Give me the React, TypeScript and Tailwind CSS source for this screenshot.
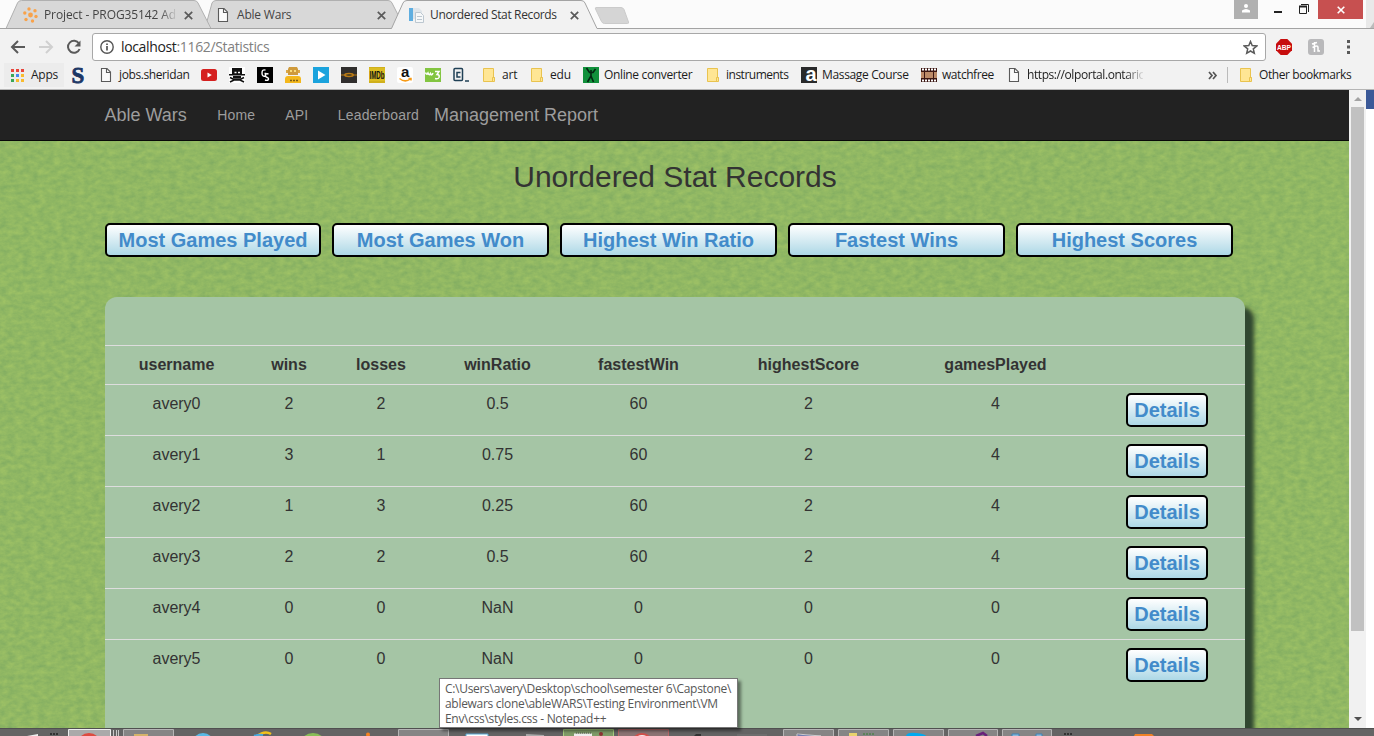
import type { ReactNode } from "react";

const records = [
  ["avery0", "2", "2", "0.5", "60", "2", "4"],
  ["avery1", "3", "1", "0.75", "60", "2", "4"],
  ["avery2", "1", "3", "0.25", "60", "2", "4"],
  ["avery3", "2", "2", "0.5", "60", "2", "4"],
  ["avery4", "0", "0", "NaN", "0", "0", "0"],
  ["avery5", "0", "0", "NaN", "0", "0", "0"],
];
const headings = ["username", "wins", "losses", "winRatio", "fastestWin", "highestScore", "gamesPlayed", ""];
const filters = ["Most Games Played", "Most Games Won", "Highest Win Ratio", "Fastest Wins", "Highest Scores"];

function PageIcon() {
  return (
    <svg width="16" height="16" viewBox="0 0 16 16" className="shrink-0" fill="#fafafa" stroke="#5a5a5a" strokeWidth="1.1">
      <path d="M1.5 1.5h5.500l3.500 3.500v9.500h-9z" />
      <path d="M6.500 1.500v4h4" fill="none" />
    </svg>
  );
}

function Folder() {
  return (
    <svg width="16" height="16" viewBox="0 0 16 16" className="shrink-0">
      <path d="M.5 1.5h10v9h1v4H.5z" fill="#ffe694" stroke="#e9c34f" />
      <path d="M9.5 14v-3.500h2" fill="none" stroke="#e9c34f" />
    </svg>
  );
}

function Cross() {
  return (
    <svg width="9" height="9" viewBox="0 0 9 9" className="shrink-0" stroke="#5a5a5a" strokeWidth="1.7">
      <path d="M.8.8l7.400 7.400M8.200.8L.8 8.200" />
    </svg>
  );
}

function Square({ children }: { children: ReactNode }) {
  return (
    <svg width="16" height="16" viewBox="0 0 16 16" className="mr-3 shrink-0 overflow-visible">
      {children}
    </svg>
  );
}

function TabStrip() {
  return (
    <div className="relative flex h-[29px] bg-[#fbfbfb]">
      <svg width="1374" height="29" className="absolute inset-0">
        <path d="M205 28.500L212 3q1-2.500 4-2.500H388q3 0 4 2.500L405 28.500z" fill="#d8d8d8" stroke="#b0b0b0" />
        <path d="M6 28.500L17.500 3q1-2.500 4-2.500H194q3 0 4 2.500L211 28.500z" fill="#d8d8d8" stroke="#b0b0b0" />
        <path d="M596 7.500h25q2 0 3 2l4.500 12.500q.5 1.500-1 1.500h-23q-2 0-3-2L595.500 9q-.5-1.500.5-1.500z" fill="#d5d5d5" stroke="#cbcbcb" />
        <path d="M1366 0h8v28h-8z" fill="#e9e9e9" />
        <path d="M1370 28l4-6v6z" fill="#bbb" />
        <path d="M0 28.500H391.500L403 3q1-2.500 4-2.500H581q3 0 4 2.500L597 28.500H1374V30H0z" fill="#f2f2f2" stroke="#a3a3a3" />
      </svg>
      <div className="relative flex w-[194px] shrink-0 items-center pl-[23px] pt-px">
        <svg width="15" height="16" viewBox="0 0 15 16" className="shrink-0" fill="#f8a24a">
          <circle cx="7.500" cy="8" r="2.400" /><circle cx="6" cy="2" r="1.700" /><circle cx="12" cy="3.800" r="1.700" />
          <circle cx="13" cy="9.500" r="1.700" /><circle cx="9.500" cy="14" r="1.700" /><circle cx="3" cy="12.500" r="1.700" /><circle cx="1.800" cy="6" r="1.700" />
        </svg>
        <span className="ml-1.5 mr-[8px] w-[132px] shrink-0 overflow-hidden whitespace-nowrap text-[12px] tracking-[-0.1px] text-[#444] [mask-image:linear-gradient(to_right,#000_116px,transparent_134px)]">
          Project - PROG35142 Adv
        </span>
        <Cross />
      </div>
      <div className="relative ml-[23px] flex w-[169px] shrink-0 items-center pt-px">
        <PageIcon />
        <span className="ml-[4px] w-[140px] shrink-0 text-[12px] tracking-[-0.2px] text-[#444]">Able Wars</span>
        <Cross />
      </div>
      <div className="relative ml-[22px] flex w-[172px] shrink-0 items-center pt-px">
        <svg width="16" height="16" viewBox="0 0 16 16" className="shrink-0">
          <path d="M1 1h4v13H1z" fill="#5faee0" /><path d="M5 1h6l3 3v8H5z" fill="#dfe5ea" />
          <path d="M7.500 5.500h5l3 3v7h-8z" fill="#f6f8f9" stroke="#bcc7d0" /><path d="M9 9.500h5M9 12.500h5" stroke="#bcc7d0" />
        </svg>
        <span className="ml-[6px] w-[140px] shrink-0 whitespace-nowrap text-[12px] tracking-[-0.35px] text-[#333]">Unordered Stat Records</span>
        <Cross />
      </div>
      <div className="relative ml-auto mr-[11px] flex h-[19px]">
        <div className="flex w-6 justify-center bg-[#b0b0b0] pt-1">
          <svg width="10" height="9" viewBox="0 0 10 9" fill="#fff"><circle cx="5" cy="2" r="2" /><path d="M1 8.500V6.500Q5 3.500 9 6.500v2z" /></svg>
        </div>
        <svg width="60" height="19" fill="none" stroke="#222">
          <path d="M16 12h8" strokeWidth="2" /><path d="M41.500 6.500h7v7h-7zM43 4.500h7.500V12" /><path d="M41 6.500h8" strokeWidth="2" />
        </svg>
        <div className="flex w-[45px] items-center justify-center bg-[#c75050]">
          <svg width="8" height="8" viewBox="0 0 8 8" stroke="#fff" strokeWidth="1.600"><path d="M.7.7l6.600 6.600M7.300.7L.7 7.300" /></svg>
        </div>
      </div>
    </div>
  );
}

function AddressBar() {
  return (
    <div className="flex h-[33px] items-start bg-[#f2f2f2] pt-1">
      <svg width="92" height="28" viewBox="0 0 92 28" fill="none" strokeWidth="2" className="shrink-0">
        <path d="M25 14H12.500M18 8l-6 6 6 6" stroke="#5a5a5a" />
        <path d="M39 14h12.500M46 8l6 6-6 6" stroke="#d0d0d0" />
        <path d="M79 10.500A6 6 0 1 0 79.600 16" stroke="#5a5a5a" /><path d="M80.500 7.500v6h-6z" fill="#5a5a5a" />
      </svg>
      <div className="flex h-7 w-[1174px] items-center rounded-[3px] border border-[#a8a8a8] bg-white">
        <svg width="14" height="14" viewBox="0 0 14 14" fill="none" stroke="#555" strokeWidth="1.400" className="ml-[7px]">
          <circle cx="7" cy="7" r="6.200" /><path d="M7 6v4.500M7 3.400v1.500" strokeWidth="1.700" />
        </svg>
        <span className="ml-[7px] pb-px text-[14px] tracking-[-0.35px] text-[#222]">localhost<span className="text-[#808080]">:1162/Statistics</span></span>
        <svg width="15" height="15" viewBox="0 0 15 15" className="ml-auto mr-[7px]" fill="none" stroke="#5a5a5a" strokeWidth="1.500">
          <path d="M7.500 1.500l1.700 4.100 4.500.4-3.400 2.900 1 4.400-3.800-2.300-3.800 2.300 1-4.400L1.300 6l4.500-.4z" />
        </svg>
      </div>
      <svg width="108" height="28" className="shrink-0">
        <path d="M14.700 6h6.600L26 10.700v6.600L21.300 22h-6.600L10 17.300v-6.600z" fill="#c70d0d" />
        <text x="18" y="16.800" textAnchor="middle" textLength="14" lengthAdjust="spacingAndGlyphs" className="font-[Liberation_Sans] text-[8px] font-bold" fill="#fff">ABP</text>
        <rect x="42" y="6" width="16" height="16" rx="3" fill="#b9b9bb" />
        <path d="M48.500 9v10M46 11l5-1.500M46.500 14.500q5.500-3 5.500 0v3.500h2" fill="none" stroke="#fff" strokeWidth="1.500" />
        <path d="M81 7h3v3h-3zm0 5.500h3v3h-3zM81 18h3v3h-3z" fill="#5a5a5a" />
      </svg>
    </div>
  );
}

function Bookmarks() {
  return (
    <div className="flex h-7 items-center whitespace-nowrap border-b border-[#b5b5b5] bg-[#f2f2f2] pb-px pl-1 text-[12px] tracking-[-0.22px] text-[#1c1c1c]">
      <div className="flex h-6 w-[60px] shrink-0 items-center bg-[#ececec] pl-[7px]">
        <svg width="13" height="13" viewBox="0 0 13 13" className="shrink-0">
          <path d="M0 0h3v3H0zm5 0h3v3H5zm5 0h3v3h-3z" fill="#e8453c" /><path d="M0 5h3v3H0z" fill="#3aa757" /><path d="M5 5h3v3H5z" fill="#4688f1" />
          <path d="M10 5h3v3h-3zm0 5h3v3h-3zm-5 0h3v3H5z" fill="#f9bb2d" /><path d="M0 10h3v3H0z" fill="#3aa757" />
        </svg>
        <span className="ml-[7px]">Apps</span>
      </div>
      <svg width="36" height="20" viewBox="0 0 36 20" className="shrink-0 overflow-visible"><text x="7.500" y="17.500" className="font-[Liberation_Serif] text-[23px] font-bold" fill="#1c3765" stroke="#1c3765" strokeWidth=".8">S</text></svg>
      <div className="flex w-[101px] shrink-0 items-center"><PageIcon /><span className="ml-[3px] tracking-[-0.4px]">jobs.sheridan</span></div>
      <Square><rect y="2" width="16" height="12" rx="2.500" fill="#d5201f" /><path d="M6.500 5.500v5L10.800 8z" fill="#fff" /></Square>
      <Square>
        <rect width="16" height="16" fill="#fff" />
        <path d="M3 1h10v7H3z" fill="#111" /><path d="M0 7h16v1.500H0zM4 9h8v2H4z" fill="#111" />
        <path d="M5.500 5.500h2m1.500 0h2" stroke="#fff" strokeWidth="1.500" />
        <path d="M1 10.500l3 1.500h8l3-1.500M1 15l4-2h6l4 2" fill="none" stroke="#111" strokeWidth="1.600" />
      </Square>
      <Square><rect width="16" height="16" fill="#000" /><path d="M8.500 3.200Q5 2 5 6t3.500 3V6.500H7.500M11.500 7Q8.500 6 8.500 8.500q0 1.500 1.700 2t1.200 2q-1 1.500-3.400.5" fill="none" stroke="#fff" strokeWidth="1.400" /></Square>
      <Square>
        <path d="M0 12q0-3 3-3h10q3 0 3 3v4H0z" fill="#f4b81c" /><path d="M4 0h8l1 2v6H3V2z" fill="#cf9a3c" /><path d="M1 3h2v3H1zm12 0h2v3h-2z" fill="#dba846" />
        <path d="M5 3h2v2H5zm4 0h2v2H9z" fill="#f9db7a" /><path d="M5 13.500h2m1 0h2m1 0h2" stroke="#795c19" strokeWidth="1.500" />
      </Square>
      <Square><rect width="16" height="16" fill="#1ba3dd" /><path d="M5 3.500v9L12.500 8z" fill="#fff" /></Square>
      <Square><rect width="16" height="16" fill="#302e2d" /><path d="M0 8h16" stroke="#b87914" /><ellipse cx="8" cy="8" rx="5" ry="2.200" fill="#b97a16" /><ellipse cx="8" cy="8" rx="3" ry=".7" fill="#332" /></Square>
      <Square><rect width="16" height="16" fill="#d0b01c" /><rect y="1" width="16" height="13" fill="#dcbd22" /><text x="8" y="12" textAnchor="middle" textLength="15" lengthAdjust="spacingAndGlyphs" className="font-[Liberation_Sans] text-[11px] font-bold tracking-normal" fill="#111">IMDb</text></Square>
      <Square><rect width="16" height="16" rx="2" fill="#fff" /><text x="8" y="10" textAnchor="middle" className="font-[Liberation_Sans] text-[15px] font-bold" fill="#111">a</text><path d="M2.500 11.500q5.500 4.500 11 .5M11.500 11.500h2.500v2" stroke="#f79a16" strokeWidth="1.500" fill="none" /></Square>
      <Square><rect y="1" width="16" height="14" fill="#83c541" /><path d="M.5 5.500q1 3 2.500.5 1 3 2.500.5 1 3 2.500-.5M10 4.500h4l-2 3q3 0 2 3-1 2-4 1" stroke="#fff" strokeWidth="1.500" fill="none" /></Square>
      <svg width="30" height="16" viewBox="0 0 30 16" className="shrink-0"><rect x="1" y="1.500" width="8.500" height="12" rx="1" fill="#f2f2f2" stroke="#204056" strokeWidth="1.500" /><path d="M7.500 5.500H4V10h3.500M12 14h4" fill="none" stroke="#204056" strokeWidth="1.500" /></svg>
      <div className="flex w-12 shrink-0 items-center"><Folder /><span className="ml-[3px]">art</span></div>
      <div className="flex w-[52px] shrink-0 items-center"><Folder /><span className="ml-[3px]">edu</span></div>
      <div className="flex w-[124px] shrink-0 items-center">
        <svg width="16" height="16" viewBox="0 0 16 16" className="shrink-0"><rect width="16" height="16" fill="#11903b" /><path d="M3.500 1l3 4.500h3.500L12.500 2M8 3v6L4.500 15M8 9l2.500 6" stroke="#032611" strokeWidth="1.600" fill="none" /></svg>
        <span className="ml-[5px] tracking-[-0.35px]">Online converter</span>
      </div>
      <div className="flex w-[94px] shrink-0 items-center"><Folder /><span className="ml-[3px] tracking-[-0.5px]">instruments</span></div>
      <div className="flex w-[120px] shrink-0 items-center">
        <svg width="16" height="16" viewBox="0 0 16 16" className="shrink-0 overflow-visible"><rect width="16" height="16" fill="#292a2b" /><text x="10" y="14" textAnchor="middle" className="font-[Liberation_Sans] text-[20px] font-bold" fill="#fff">a</text></svg>
        <span className="ml-[5px] tracking-[-0.35px]">Massage Course</span>
      </div>
      <div className="flex w-[87px] shrink-0 items-center">
        <svg width="16" height="14" viewBox="0 0 16 14" className="shrink-0"><rect width="16" height="14" fill="#3c1713" /><path d="M0 4h3v6H0zm4 0h8v6H4zm9 0h3v6h-3z" fill="#bd8b68" /><path d="M1 1.500h15M1 12.500h15" stroke="#fff" strokeWidth="2" strokeDasharray="2 1" /></svg>
        <span className="ml-[5px] tracking-[-0.45px]">watchfree</span>
      </div>
      <div className="flex w-[200px] shrink-0 items-center">
        <PageIcon />
        <span className="ml-[3px] w-[116px] overflow-hidden tracking-[-0.42px] [mask-image:linear-gradient(to_right,#000_98px,transparent_118px)]">https://olportal.ontario</span>
      </div>
      <svg width="19" height="9" viewBox="0 0 19 9" className="shrink-0" fill="none" stroke="#555" strokeWidth="1.700"><path d="M1 1l3 3.500L1 8M5 1l3 3.500L5 8" /></svg>
      <div className="h-4 w-px bg-[#bbb]" />
      <div className="ml-3 flex items-center"><Folder /><span className="ml-[3px] tracking-[-0.42px]">Other bookmarks</span></div>
    </div>
  );
}

function Site() {
  return (
    <main className="relative h-full w-[1349px] overflow-hidden bg-[#92b964] font-['Liberation_Sans',sans-serif] text-[#333]">
      <svg width="1349" height="646" className="absolute inset-0">
        <filter id="grass" x="0" y="0" width="100%" height="100%" colorInterpolationFilters="sRGB">
          <feTurbulence type="fractalNoise" baseFrequency="0.13 0.2" numOctaves="4" seed="8" />
          <feColorMatrix values=".15 0 0 0 .492  .11 0 0 0 .665  .02 0 0 0 .38  0 0 0 0 1" />
        </filter>
        <rect width="1349" height="646" filter="url(#grass)" />
      </svg>
      <nav className="relative flex h-[51px] items-center border-b border-[#080808] bg-[#222] pl-[104.500px] text-[14px] tracking-[0.15px] text-[#9d9d9d]">
        <span className="text-[18px] tracking-normal">Able Wars</span>
        <span className="ml-[30.500px]">Home</span>
        <span className="ml-[30px]">API</span>
        <span className="ml-[29.500px]">Leaderboard</span>
        <span className="ml-[15px] text-[18px] tracking-normal">Management Report</span>
      </nav>
      <div className="relative ml-[105px] w-[1140px]">
        <h1 className="h-[82px] pt-[19px] text-center text-[30px] leading-[33px]">Unordered Stat Records</h1>
        <div className="grid grid-cols-[227px_repeat(4,228px)]">
          {filters.map((label) => (
            <button key={label} className="h-[34px] w-[calc(100%-11px)] whitespace-nowrap rounded-[5px] border-2 border-black bg-linear-to-b from-white to-[#add8e6] text-[20px] font-bold leading-[30px] text-[#428bca]">
              {label}
            </button>
          ))}
        </div>
        <section className="mt-10 h-[442px] rounded-xl bg-[#a5c5a5] pt-12 shadow-[9px_10px_4px_#304730]">
          <table className="w-full table-fixed border-collapse text-center text-[16px] leading-[22px]">
            <colgroup>
              <col className="w-[143px]" /><col className="w-[82px]" /><col className="w-[102px]" /><col className="w-[131px]" />
              <col className="w-[151px]" /><col className="w-[189px]" /><col className="w-[185px]" /><col className="w-[157px]" />
            </colgroup>
            <thead>
              <tr className="h-[39px] border-t border-[#ddd]">
                {headings.map((h, i) => <th key={i} className="p-0 align-middle">{h}</th>)}
              </tr>
            </thead>
            <tbody>
              {records.map((row) => (
                <tr key={row[0]} className="h-[51px] border-t border-[#ddd]">
                  {row.map((v, i) => <td key={i} className="pt-2 align-top">{v}</td>)}
                  <td className="pt-2 align-top">
                    <button className="mx-auto block h-[34px] w-[82px] rounded-[5px] border-2 border-black bg-linear-to-b from-white to-[#add8e6] pl-px text-[20px] font-bold leading-[30px] text-[#428bca]">
                      Details
                    </button>
                  </td>
                </tr>
              ))}
            </tbody>
          </table>
        </section>
      </div>
    </main>
  );
}

function Taskbar() {
  return (
    <svg width="1374" height="8" viewBox="0 0 1374 8" className="block bg-[#646464]">
      <path d="M0 .5h1374" stroke="#505050" />
      <g fill="#858585" stroke="#b5b5b5">
        <path d="M123.500 10V1.500h50V10M398.500 10V1.500h50V10M783.500 10V1.500h50V10M838.500 10V1.500h50V10M893.500 10V1.500h50V10M948.500 10V1.500h49V10M1002.500 10V1.500h49V10" />
        <path d="M68.500 10V1.500h42V10" fill="#aaa" stroke="#eee" />
        <path d="M563.500 10V1.500h50V10" fill="#7f9b68" stroke="#a8d080" />
        <path d="M618.500 10V1.500h50V10" fill="#8b7474" stroke="#b96a6a" />
      </g>
      <path d="M113.500 2v6M116.500 2v6M118.500 2v6" stroke="#c8c8c8" />
      <path d="M50 6h8M1064 6h8" stroke="#222" strokeWidth="1.500" strokeDasharray="2 1" />
      <path d="M27 8l11-2v2z" fill="#eee" />
      <circle cx="89" cy="17" r="12" fill="#dd4b40" />
      <path d="M134 6h14v2h-14z" fill="#d5b36a" />
      <circle cx="203" cy="16" r="11" fill="#59b9e5" />
      <path d="M257 8q8-6 14-2" stroke="#f4c21a" strokeWidth="2.500" fill="none" /><path d="M254 8q5-2 9-1" stroke="#48a8df" strokeWidth="2" fill="none" />
      <circle cx="313" cy="19" r="14" fill="#88bd57" /><circle cx="368" cy="6.500" r="2" fill="#f58220" />
      <path d="M466 8V6h22v2" fill="#fff" stroke="#56a9d5" /><path d="M526 7l18 1" stroke="#aaa" strokeWidth="2" />
      <path d="M574 8V5.500h18V8z" fill="#eee" /><path d="M576 5h16" stroke="#555" strokeDasharray="1 1" /><circle cx="601" cy="6" r="2" fill="#8f3434" />
      <circle cx="642" cy="16" r="10" fill="#eee" stroke="#d2504b" strokeWidth="2" />
      <path d="M694 8l2-2h5v2z" fill="#333" /><path d="M737 7h30" stroke="#777" />
      <path d="M797 8V6l24 2z" fill="#172f94" stroke="#ccc" /><path d="M849 8V5h8v3z" fill="#ead36d" /><path d="M863 6h11" stroke="#368030" strokeDasharray="2 1" />
      <path d="M906 8q1-4 10-3t10 3z" fill="#00aaf0" /><path d="M976 8l7-3 4 3" fill="none" stroke="#68217a" strokeWidth="2.500" />
      <path d="M1012 8V6h7v2M1036 8V6h6v2" fill="#8db9d9" stroke="#3d82b6" /><path d="M1134 8l1-2h17l2 2z" fill="#ef8125" />
    </svg>
  );
}

export default function App() {
  return (
    <div className="relative flex h-[736px] w-[1374px] flex-col overflow-hidden bg-white font-['Open_Sans','Noto_Sans',sans-serif]">
      <TabStrip />
      <AddressBar />
      <Bookmarks />
      <div className="flex h-[638px]">
        <Site />
        <div className="flex w-[17px] flex-col items-center bg-[#f1f1f1]">
          <svg width="17" height="17"><path d="M5 11l4-4 4 4z" fill="#a3a3a3" /></svg>
          <div className="h-[524px] w-[13px] bg-[#c1c1c1]" />
          <svg width="17" height="17" className="mt-auto"><path d="M5 6h8l-4 4z" fill="#505050" /></svg>
        </div>
        <div className="h-[19px] w-2 bg-[#3b5998]" />
      </div>
      <Taskbar />
      <div className="absolute left-[439px] top-[678px] h-[50px] w-[299px] whitespace-nowrap border border-[#767676] bg-white pl-[5px] pt-[2px] text-[12px] leading-[15px] tracking-[-0.3px] text-[#575757] shadow-[3px_3px_3px_rgba(0,0,0,0.45)]">
        C:\Users\avery\Desktop\school\semester 6\Capstone\<br />
        ablewars clone\ableWARS\Testing Environment\VM<br />
        Env\css\styles.css - Notepad++
      </div>
    </div>
  );
}
